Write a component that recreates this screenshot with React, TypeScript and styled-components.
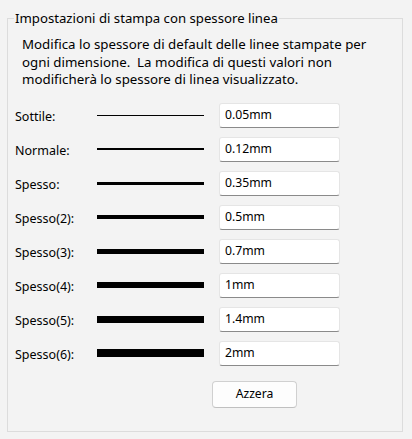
import React from "react";
import styled, { createGlobalStyle } from "styled-components";

const Global = createGlobalStyle`
  html, body { margin: 0; padding: 0; background: #f3f3f3; }
  body { font-family: "Noto Sans", "Open Sans", sans-serif; font-size: 13px; color: #000; }
  #root { width: 412px; height: 439px; overflow: hidden; }
`;

const Page = styled.div`
  width: 412px;
  height: 439px;
  box-sizing: border-box;
  padding: 10px 9px 7px 7px;
  background: #f3f3f3;
  display: flex;
`;

const Group = styled.fieldset`
  flex: 1;
  margin: 0;
  border: 1px solid #dcdcdc;
  padding: 0 0 0 6px;
  display: flex;
  flex-direction: column;
  min-width: 0;
`;

const Title = styled.legend`
  padding: 0 1px;
  line-height: 16px;
  font-size: 13.2px;
`;

const Description = styled.p`
  margin: 10px 0 0 8px;
  line-height: 17.5px;
  font-size: 13.3px;
  white-space: nowrap;
`;

const Rows = styled.div`
  margin-top: 14px;
  display: flex;
  flex-direction: column;
  gap: 9px;
`;

const Row = styled.div`
  display: grid;
  grid-template-columns: 68px 107px 121px;
  column-gap: 15px;
  align-items: center;
  height: 25px;
`;

const Label = styled.span`
  padding-left: 1px;
  margin-top: 3px;
  font-size: 12.5px;
  white-space: nowrap;
`;

const Stroke = styled.div<{ $w: number }>`
  height: ${(p) => p.$w}px;
  background: #000;
`;

const Field = styled.input`
  box-sizing: border-box;
  width: 121px;
  height: 25px;
  margin: 0;
  padding: 0 0 1px 5px;
  border: 1px solid #e5e5e5;
  border-bottom-color: #8a8a8a;
  border-radius: 3px;
  background: #fff;
  font: inherit;
  font-size: 12.2px;
  color: #000;
  outline: none;
`;

const Actions = styled.div`
  margin-top: 15px;
  padding-left: 198px;
`;

const Button = styled.button`
  box-sizing: border-box;
  width: 85px;
  height: 27px;
  margin: 0;
  border: 1px solid #d0d0d0;
  border-bottom-color: #c0c0c0;
  border-radius: 4px;
  background: #fdfdfd;
  font: inherit;
  font-size: 12.2px;
  color: #000;
  padding: 0 0 1px;
`;

const rows = [
  { label: "Sottile:", w: 1, v: "0.05mm" },
  { label: "Normale:", w: 2, v: "0.12mm" },
  { label: "Spesso:", w: 3, v: "0.35mm" },
  { label: "Spesso(2):", w: 4, v: "0.5mm" },
  { label: "Spesso(3):", w: 5, v: "0.7mm" },
  { label: "Spesso(4):", w: 6, v: "1mm" },
  { label: "Spesso(5):", w: 7, v: "1.4mm" },
  { label: "Spesso(6):", w: 8, v: "2mm" },
];

export default function App() {
  return (
    <>
      <Global />
      <Page>
        <Group>
          <Title>Impostazioni di stampa con spessore linea</Title>
          <Description>
            Modifica lo spessore di default delle linee stampate per
            <br />
            ogni dimensione.&nbsp; La modifica di questi valori non
            <br />
            modificherà lo spessore di linea visualizzato.
          </Description>
          <Rows>
            {rows.map((r) => (
              <Row key={r.label}>
                <Label>{r.label}</Label>
                <Stroke $w={r.w} />
                <Field defaultValue={r.v} />
              </Row>
            ))}
          </Rows>
          <Actions>
            <Button>Azzera</Button>
          </Actions>
        </Group>
      </Page>
    </>
  );
}
